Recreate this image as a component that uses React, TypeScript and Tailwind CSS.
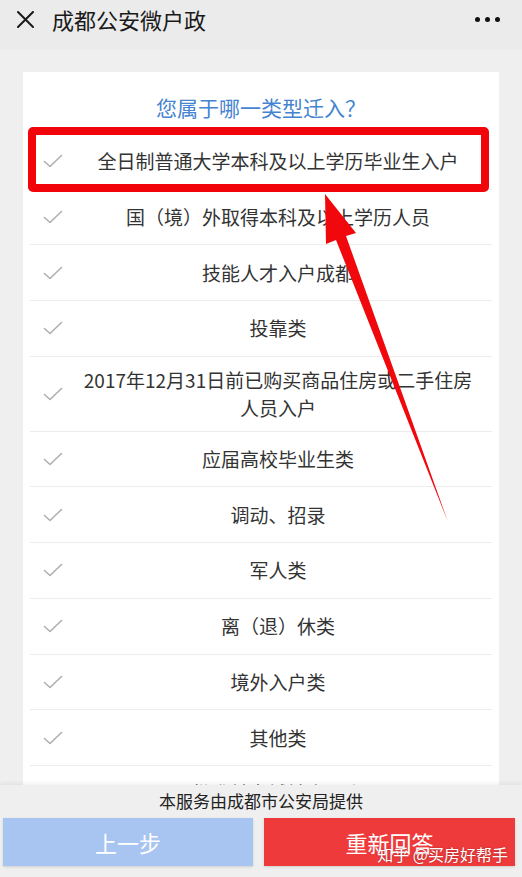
import React from "react";

// ─── Chengdu police hukou: migration type picker ─────────────
// WeChat-style header, a white card with selectable options, a footer
// with two buttons, and a red annotation box + arrow on top.

const FONT = { fontFamily: '"Noto Sans CJK SC", "Noto Sans", sans-serif' };

const options: string[][] = [
  ["全日制普通大学本科及以上学历毕业生入户"],
  ["国（境）外取得本科及以上学历人员"],
  ["技能人才入户成都"],
  ["投靠类"],
  ["2017年12月31日前已购买商品住房或二手住房", "人员入户"],
  ["应届高校毕业生类"],
  ["调动、招录"],
  ["军人类"],
  ["离（退）休类"],
  ["境外入户类"],
  ["其他类"],
  ["已批准转为城镇户口人员"],
];

function Tick() {
  return (
    <svg width="20" height="14" viewBox="0 0 20 14" fill="none">
      <path d="M1.5 7.5 L7 12.5 L18.5 1.5" stroke="#b0b0b0" strokeWidth="1.6" strokeLinecap="round" strokeLinejoin="round" />
    </svg>
  );
}

function OptionRow({ lines }: { lines: string[] }) {
  const multi = lines.length > 1;
  return (
    <div className={`flex items-center border-b border-[#ececec] ${multi ? "min-h-[74px] py-[9px]" : "h-[55.7px]"}`}>
      <div className="w-[44px] shrink-0 flex justify-center pl-[2px]">
        <Tick />
      </div>
      <div className="flex-1 pr-[10px] text-center text-[19px] leading-[28px] text-[#333]">
        {lines.map((l, i) => (
          <div key={i} className="whitespace-nowrap">{l}</div>
        ))}
      </div>
    </div>
  );
}

export default function App() {
  return (
    <div className="relative w-[522px] h-[877px] overflow-hidden bg-[#efefef] flex flex-col" style={FONT}>
      {/* header */}
      <header className="h-[50px] shrink-0 bg-[#ebebeb] flex items-start pt-[6px]">
        <div className="flex items-center h-[26px] w-full">
          <svg className="ml-[17px]" width="17" height="17" viewBox="0 0 17 17">
            <path d="M1 1 L16 16 M16 1 L1 16" stroke="#1a1a1a" strokeWidth="2" strokeLinecap="round" />
          </svg>
          <h1 className="ml-[18px] text-[22px] leading-[26px] text-[#1a1a1a]">成都公安微户政</h1>
          <div className="ml-auto mr-[22px] flex gap-[5px]">
            <span className="w-[5px] h-[5px] rounded-full bg-[#111]" />
            <span className="w-[5px] h-[5px] rounded-full bg-[#111]" />
            <span className="w-[5px] h-[5px] rounded-full bg-[#111]" />
          </div>
        </div>
      </header>

      {/* scroll area with the card */}
      <div className="flex-1 min-h-0 overflow-hidden pt-[22px]">
        <main className="mx-[23px] bg-white px-[7px]">
          <div className="pt-[22px] pb-[14px] text-center text-[21px] leading-[26px] text-[#4484d0]">您属于哪一类型迁入？</div>
          {options.map((lines, i) => (
            <OptionRow key={i} lines={lines} />
          ))}
        </main>
      </div>

      {/* footer */}
      <footer className="relative h-[92px] shrink-0 bg-[#efefef] shadow-[0_-2px_4px_rgba(0,0,0,0.06)]">
        <p className="text-center text-[17px] leading-[30px] pt-[1px] text-[#222]">本服务由成都市公安局提供</p>
        <div className="flex gap-[11px] px-[3px] pt-[2px]">
          <button className="w-[250px] h-[48px] bg-[#a8c4f1] text-white text-[22px] shadow-sm">上一步</button>
          <button className="w-[251px] h-[48px] bg-[#ef3a3c] text-white text-[22px] shadow-sm">重新回答</button>
        </div>
      </footer>

      {/* watermark */}
      <div className="absolute right-[14px] bottom-[13px] text-white text-[16px] leading-[20px] [text-shadow:0_0_2px_rgba(0,0,0,0.35)]">
        知乎 @买房好帮手
      </div>

      {/* annotation: red box + arrow */}
      <div className="absolute left-[28px] top-[127px] w-[461px] h-[65px] border-[8px] border-[#f2050a] rounded-[5px] pointer-events-none" />
      <svg className="absolute left-0 top-0 pointer-events-none" width="522" height="877">
        <polygon points="325,194 356,233 346,236 448,522 336,240 326,244" fill="#f0080c" />
      </svg>
    </div>
  );
}
